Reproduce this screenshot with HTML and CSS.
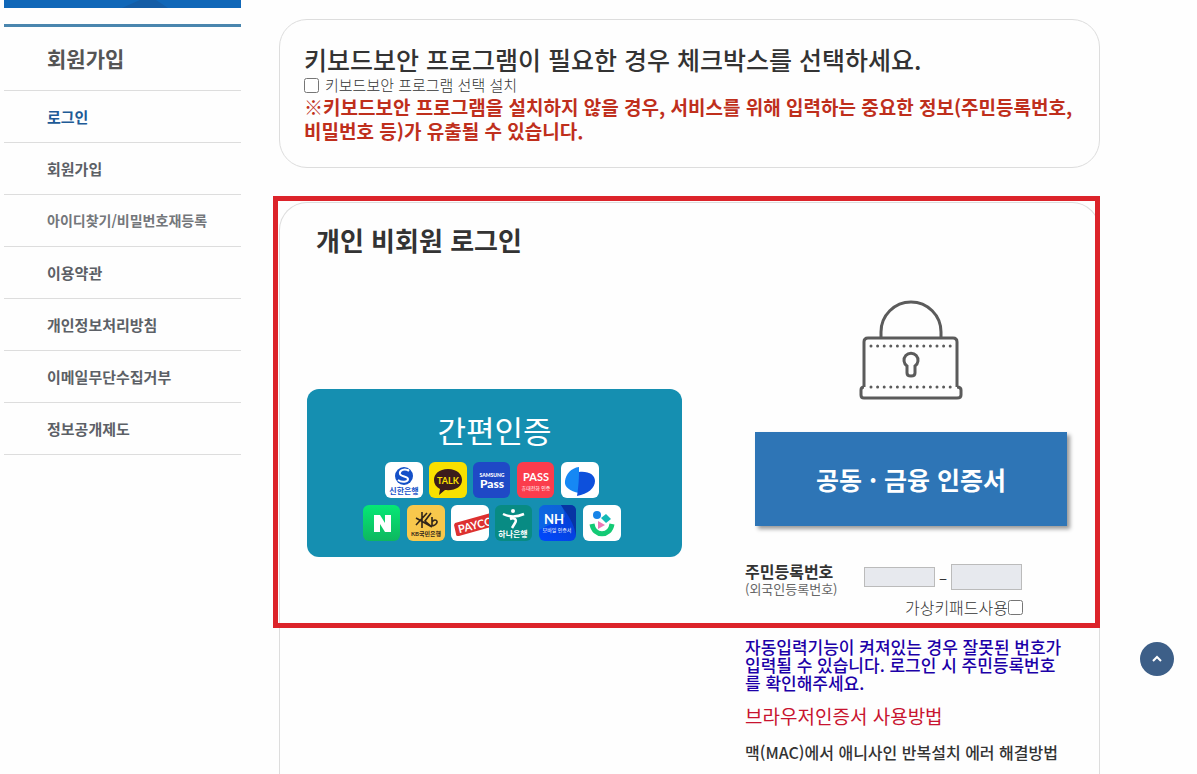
FILE: index.html
```html
<!DOCTYPE html>
<html lang="ko">
<head>
  <title>개인 비회원 로그인</title>

  <meta charset="utf-8">
  <meta name="viewport" content="width=device-width, initial-scale=1">
  <link rel="stylesheet" href="styles.css">
</head>
<body>

<div class="page">
  <aside class="sidebar">
    <svg class="banner" viewBox="0 0 237 8" preserveAspectRatio="none">
      <rect width="237" height="8" fill="#1067b8"/>
      <path d="M118 8L136 0H152L164 8Z" fill="#145da6"/>
    </svg>
    <h2 class="side-title">회원가입</h2>
    <ul class="side-menu">
      <li><a href="#" class="active">로그인</a></li>
      <li><a href="#">회원가입</a></li>
      <li><a href="#" class="long">아이디찾기/비밀번호재등록</a></li>
      <li><a href="#">이용약관</a></li>
      <li><a href="#">개인정보처리방침</a></li>
      <li><a href="#">이메일무단수집거부</a></li>
      <li><a href="#">정보공개제도</a></li>
    </ul>
  </aside>

  <main class="content">
    <section class="security">
      <h3>키보드보안 프로그램이 필요한 경우 체크박스를 선택하세요.</h3>
      <div class="check">
        <input type="checkbox" id="keyboard">
        <label for="keyboard">키보드보안 프로그램 선택 설치</label>
      </div>
      <p class="warning">※키보드보안 프로그램을 설치하지 않을 경우, 서비스를 위해 입력하는 중요한 정보(주민등록번호,<br>비밀번호 등)가 유출될 수 있습니다.</p>
    </section>

    <section class="login">
      <div class="nonmember">
        <h3>개인 비회원 로그인</h3>
        <div class="columns">
          <button type="button" class="easy">
            <span class="easy-title">간편인증</span>
            <span class="icons">
              <svg viewBox="0 0 38 36">
                <rect width="38" height="36" rx="6" fill="#fff"/>
                <circle cx="19" cy="14" r="9" fill="#1450c8"/>
                <path d="M24 9C20 6 14 8 15 12C16 15 23 14 23 17C23 20 17 21 13 18" fill="none" stroke="#fff" stroke-width="2"/>
                <circle cx="23" cy="8" r="1" fill="#fff"/>
                <text x="19" y="32" font-size="8" font-weight="bold" fill="#1450c8">신한은행</text>
              </svg>
              <svg viewBox="0 0 38 36">
                <rect width="38" height="36" rx="6" fill="#f9e000"/>
                <path d="M19 7C10 7 5 12 5 18C5 22 7 25 11 27L10 33L16 28C26 29 33 25 33 18C33 12 28 7 19 7Z" fill="#3b1c1c"/>
                <text x="19" y="22" font-size="9" font-weight="bold" fill="#f9e000">TALK</text>
              </svg>
              <svg viewBox="0 0 38 36">
                <rect width="37" height="36" rx="6" fill="#1f49c6"/>
                <text x="19" y="15" font-size="5" font-weight="900" fill="#fff">SAMSUNG</text>
                <text x="19" y="26" font-size="12" font-weight="900" fill="#fff">Pass</text>
              </svg>
              <svg viewBox="0 0 38 36">
                <rect width="37" height="36" rx="6" fill="#fb3c4c"/>
                <text x="19" y="19" font-size="11" font-weight="bold" fill="#fff">PASS</text>
                <text x="19" y="28" font-size="5" fill="#fff">휴대전화 인증</text>
              </svg>
              <svg viewBox="0 0 38 36">
                <rect width="38" height="36" rx="6" fill="#fff"/>
                <path d="M18 5V31C9 29 3 25 4 19C5 12 10 6 18 5Z" fill="#1688f4"/>
                <path d="M18 10C28 9 34 13 34 19C34 26 27 32 16 34C17 29 18 19 18 10Z" fill="#0d50dc"/>
              </svg>
            </span>
            <span class="icons">
              <svg viewBox="0 0 38 36">
                <defs>
                  <linearGradient id="naver" x2="0" y2="1"><stop stop-color="#05e875"/><stop offset="1" stop-color="#0eb75f"/></linearGradient>
                </defs>
                <rect width="37" height="36" rx="6" fill="url(#naver)"/>
                <path d="M11 27V10H17L22 18V10H28V27H22L17 19V27Z" fill="#fff"/>
              </svg>
              <svg viewBox="0 0 38 36">
                <rect width="38" height="36" rx="6" fill="#f8c84c"/>
                <path d="M9 13L25 22M9 20L20 8M15 7V23M24 8L18 16L25 22M25 12V21M25 17C28 13 32 16 29 19C27 21 25 21 25 20" fill="none" stroke="#30251a" stroke-width="1.6"/>
                <text x="19" y="31" font-size="6" font-weight="bold" fill="#30251a">KB국민은행</text>
              </svg>
              <svg viewBox="0 0 38 36">
                <defs><clipPath id="payco"><rect width="38" height="36" rx="6"/></clipPath></defs>
                <rect width="38" height="36" rx="6" fill="#fff"/>
                <g clip-path="url(#payco)">
                  <path d="M4 18L40 8V22L8 31C6 31 5 31 5 29L3 20Z" fill="#dd3130"/>
                  <text x="25" y="24" font-size="11" font-weight="bold" fill="#fff" transform="rotate(-14 25 22)">PAYCO</text>
                </g>
              </svg>
              <svg viewBox="0 0 38 36">
                <rect width="37" height="36" rx="6" fill="#088b83"/>
                <circle cx="18" cy="6" r="2" fill="#fff"/>
                <path d="M8 9C14 12 22 12 29 9M15 14C20 12 22 15 20 18L17 23" fill="none" stroke="#fff" stroke-width="2.5"/>
                <text x="18" y="32" font-size="8" font-weight="bold" fill="#fff">하나은행</text>
              </svg>
              <svg viewBox="0 0 38 36">
                <defs>
                  <linearGradient id="nh" x1="0" y1="1" x2="1" y2="0"><stop stop-color="#0048ff"/><stop offset="1" stop-color="#083ec8"/></linearGradient>
                </defs>
                <rect width="37" height="36" rx="6" fill="url(#nh)"/>
                <path d="M6 0H22Q26 5 26 12L0 25V6Q0 0 6 0Z" fill="#1685dc" opacity=".5"/>
                <path d="M22 0H31Q37 0 37 6V30C34 15 27 8 22 0Z" fill="#0734a4"/>
                <text x="15" y="19" font-size="13" font-weight="bold" fill="#fff">NH</text>
                <text x="18" y="27" font-size="5" fill="#fff">모바일 인증서</text>
              </svg>
              <svg viewBox="0 0 38 36">
                <rect width="38" height="36" rx="6" fill="#fff"/>
                <circle cx="14" cy="10" r="4" fill="#1684e8"/>
                <path d="M23 9L28 14L23 18L18 13Z" fill="#13b9b5"/>
                <path d="M15 16L22 20L15 24Z" fill="#ee78b5"/>
                <path d="M9 19C11 32 27 32 29 19" fill="none" stroke="#14ca75" stroke-width="5"/>
              </svg>
            </span>
          </button>

          <div class="certificate">
            <svg class="lock" viewBox="0 0 104 100" fill="none" stroke="#5b5b5b" stroke-width="3">
              <path d="M22 37V32A30 30 0 0 1 82 32V37M5 87V42Q5 38 9 38H94Q98 38 98 42V87M5 87Q2 87 2 90V95Q2 98 5 98H98Q102 98 102 95V90Q102 87 98 87"/>
              <path d="M12 46H93M12 87H93" stroke-dasharray="0 6.6" stroke-linecap="round"/>
              <path d="M48 66V73Q48 76 52 76T56 73V66A7 7 0 1 0 48 66Z"/>
            </svg>
            <button type="button" class="cert-button">공동 · 금융 인증서</button>
            <div class="number">
              <label for="front"><strong>주민등록번호</strong><span>(외국인등록번호)</span></label>
              <div class="fields">
                <input type="text" id="front" class="front">
                <span>–</span>
                <input type="password" class="back" aria-label="주민등록번호 뒷자리">
              </div>
            </div>
            <div class="keypad">
              <label for="keypad">가상키패드사용</label><input type="checkbox" id="keypad">
            </div>
          </div>
        </div>
      </div>

      <div class="columns">
        <div class="guide">
          <p class="notice">자동입력기능이 켜져있는 경우 잘못된 번호가<br>입력될 수 있습니다. 로그인 시 주민등록번호<br>를 확인해주세요.</p>
          <a href="#" class="browser-link">브라우저인증서 사용방법</a>
          <a href="#" class="mac-link">맥(MAC)에서 애니사인 반복설치 에러 해결방법</a>
        </div>
      </div>
    </section>
  </main>
</div>

<a href="#" class="to-top" aria-label="맨 위로">
  <svg viewBox="0 0 12 8"><path d="M2 6L6 2L10 6" fill="none" stroke="#fff" stroke-width="2"/></svg>
</a>

</body>
</html>
```
FILE: styles.css
```css
* {
  box-sizing: border-box;
}
body {
  background: #fefefe;
  color: #333;
  font-family: "Noto Sans CJK KR", sans-serif;
  font-size: 15px;
  margin: 0;
}
h2, h3, p, ul {
  margin: 0;
  padding: 0;
}
a {
  color: inherit;
  text-decoration: none;
}
button {
  border: 0;
  color: white;
  font-family: inherit;
  padding: 0;
}
input {
  margin: 0;
}
input[type="checkbox"] {
  flex: none;
  height: 15px;
  width: 15px;
}
label, .warning, .notice, .guide a {
  white-space: nowrap;
}
.page {
  display: flex;
  gap: 38px;
  min-height: 100vh;
  padding: 0 97px 0 4px;
}

/* left menu */
.sidebar {
  flex: none;
  width: 237px;
}
.banner {
  display: block;
  height: 8px;
  width: 100%;
}
.side-title {
  border-bottom: 1px solid #ddd;
  border-top: 3px solid #4a86ae;
  color: #555;
  font-size: 21px;
  line-height: 63px;
  margin-top: 16px;
  padding-left: 43px;
}
.side-menu {
  list-style: none;
}
.side-menu a {
  border-bottom: 1px solid #ddd;
  color: #5c6066;
  display: block;
  font-weight: bold;
  line-height: 51px;
  padding-left: 43px;
}
.side-menu .active {
  color: #205a96;
}
.side-menu .long {
  color: #74777b;
  font-size: 14px;
}

.content {
  display: flex;
  flex: 1;
  flex-direction: column;
  gap: 34px;
  min-width: 0;
  padding-top: 19px;
}
.security {
  border: 1px solid #ddd;
  border-radius: 28px;
  padding: 23px 24px 24px;
}
.security h3 {
  font-size: 25px;
  font-weight: 500;
  line-height: 32px;
}
.check {
  align-items: center;
  display: flex;
  font-weight: 300;
  gap: 6px;
  line-height: 20px;
}
.warning {
  color: #bf2f1c;
  font-size: 19px;
  font-weight: bold;
  line-height: 24px;
}

.login {
  border: 1px solid #ddd;
  border-bottom: 0;
  border-radius: 28px 28px 0 0;
  flex: 1;
}
.nonmember {
  padding: 19px 0 12px;
  position: relative;
}
.nonmember::after {
  border: 5px solid #dc232a;
  content: "";
  inset: -7px -1px 0 -7px;
  pointer-events: none;
  position: absolute;
}
.nonmember h3 {
  font-size: 26px;
  line-height: 36px;
  padding-left: 36px;
}
.columns {
  column-gap: 63px;
  display: grid;
  grid-template-columns: 375fr 322fr;
  padding: 0 32px 0 27px;
}
.nonmember .columns {
  margin-top: 42px;
}

.easy {
  align-self: start;
  background: #158fb1;
  border-radius: 12px;
  height: 168px;
  margin-top: 89px;
  padding-top: 12px;
}
.easy-title {
  display: block;
  font-size: 31px;
  font-weight: 400;
  line-height: 40px;
  margin-bottom: 12px;
}
.icons {
  display: flex;
  gap: 6px;
  justify-content: center;
  margin-bottom: 7px;
  padding-right: 5px;
}
.icons svg {
  height: 36px;
  width: 38px;
}
.icons text {
  font-family: Lato, "Noto Sans CJK KR", sans-serif;
  text-anchor: middle;
}

.certificate {
  min-width: 0;
  padding-left: 10px;
}
.lock {
  display: block;
  height: 100px;
  margin: 0 auto;
  width: 104px;
}
.cert-button {
  background: #2e75b6;
  box-shadow: 3px 3px 4px #999;
  display: block;
  font-size: 25px;
  font-weight: bold;
  height: 94px;
  margin: 32px 0 36px;
  width: 100%;
}
.number {
  display: flex;
  gap: 29px;
  margin-left: -10px;
}
.number label {
  width: 90px;
}
.number strong, .number label span {
  display: block;
  line-height: 18px;
}
.number strong {
  font-size: 16px;
}
.number label span {
  color: #666;
  font-size: 13px;
}
.fields {
  align-items: center;
  display: flex;
  height: 30px;
}
.fields input {
  background: #e7e9ee;
  border: 1px solid #bbb;
  width: 71px;
}
.fields span {
  text-align: center;
  width: 16px;
}
.fields .front {
  height: 20px;
}
.fields .back {
  height: 26px;
}
.keypad {
  align-items: center;
  display: flex;
  font-size: 16px;
  font-weight: 300;
  justify-content: flex-end;
  line-height: 18px;
  padding-right: 44px;
}

.guide {
  grid-column: 2;
  min-width: 0;
  padding: 10px 0;
}
.guide a {
  display: block;
}
.notice {
  color: #1c00a8;
  font-size: 17px;
  font-weight: 500;
  line-height: 18px;
}
.browser-link {
  color: #c8142f;
  font-size: 19px;
  line-height: 24px;
  margin-top: 12px;
}
.mac-link {
  font-size: 16px;
  font-weight: 500;
  line-height: 24px;
  margin-top: 12px;
}

.to-top {
  align-items: center;
  background: #3d5f88;
  border-radius: 50%;
  bottom: 98px;
  display: flex;
  height: 34px;
  justify-content: center;
  position: fixed;
  right: 23px;
  width: 34px;
}
.to-top svg {
  width: 12px;
}
```
